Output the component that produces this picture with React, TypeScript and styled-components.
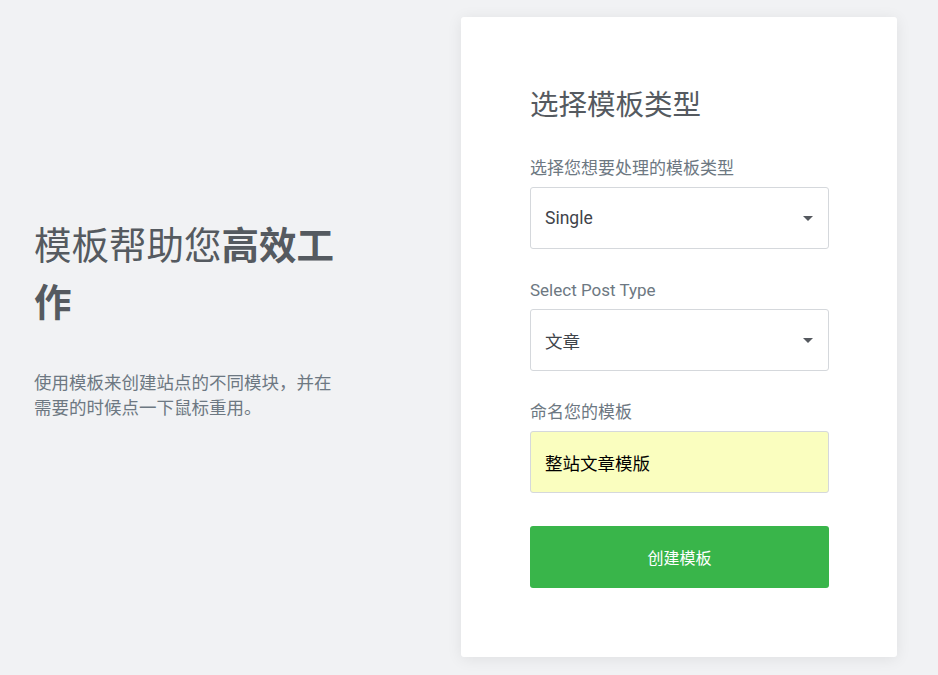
import React, { useState } from "react";
import styled, { createGlobalStyle } from "styled-components";

const GlobalStyle = createGlobalStyle`
  html, body {
    margin: 0;
    padding: 0;
    background: #f1f2f4;
    font-family: Roboto, "Noto Sans CJK SC", "Liberation Sans", sans-serif;
  }
`;

const Page = styled.div`
  display: flex;
  height: 675px;
  box-sizing: border-box;
  padding: 17px 41px 18px 34px;
`;

const Intro = styled.div`
  flex: 1;
  display: flex;
  flex-direction: column;
  justify-content: center;
  padding-bottom: 36px;
`;

const IntroTitle = styled.h1`
  margin: 0 0 39px;
  max-width: 310px;
  font-size: 37.5px;
  line-height: 57px;
  font-weight: 400;
  color: #555a60;
`;

const Strong = styled.span`
  font-weight: 700;
`;

const IntroText = styled.p`
  margin: 0;
  max-width: 310px;
  font-size: 17.5px;
  line-height: 25px;
  color: #6d7882;
`;

const Card = styled.form`
  width: 436px;
  box-sizing: border-box;
  align-self: flex-start;
  padding: 72px 68px 69px 69px;
  background: #fff;
  border-radius: 3px;
  box-shadow: 0 2px 15px rgba(0, 0, 0, 0.08);
`;

const CardTitle = styled.h2`
  margin: 0 0 33px;
  font-size: 28.5px;
  line-height: 34px;
  font-weight: 400;
  color: #555a60;
`;

const Field = styled.div`
  margin-bottom: 29px;
  &:last-of-type {
    margin-bottom: 33px;
  }
`;

const Label = styled.label`
  display: block;
  margin-bottom: 7px;
  font-size: 17px;
  line-height: 24px;
  color: #6d7882;
`;

const SelectBox = styled.div`
  height: 62px;
  box-sizing: border-box;
  display: flex;
  align-items: center;
  padding: 0 14px;
  border: 1px solid #d5d8dc;
  border-radius: 3px;
  background: #fff;
  font-size: 17.5px;
  color: #3f444a;
`;

const Caret = styled.span`
  margin-left: auto;
  margin-right: 1px;
  width: 0;
  height: 0;
  border-left: 5.5px solid transparent;
  border-right: 5.5px solid transparent;
  border-top: 5.5px solid #55595f;
`;

const TextInput = styled.input<{ $filled: boolean }>`
  display: block;
  width: 100%;
  height: 62px;
  box-sizing: border-box;
  padding: 0 14px;
  border: 1px solid #d5d8dc;
  border-radius: 3px;
  background: ${(p) => (p.$filled ? "#fafebf" : "#fff")};
  font-family: inherit;
  font-size: 17.5px;
  color: #000;
  outline: none;
`;

const Submit = styled.button`
  display: block;
  width: 100%;
  height: 62px;
  border: 0;
  border-radius: 3px;
  background: #39b54a;
  color: #fff;
  font-family: inherit;
  font-size: 16px;
  cursor: pointer;
`;

const Select = ({ value }: { value: string }) => (
  <SelectBox>
    {value}
    <Caret />
  </SelectBox>
);

const App = () => {
  const [name, setName] = useState("整站文章模版");

  return (
    <>
      <GlobalStyle />
      <Page>
        <Intro>
          <IntroTitle>
            模板帮助您<Strong>高效工作</Strong>
          </IntroTitle>
          <IntroText>
            使用模板来创建站点的不同模块，并在需要的时候点一下鼠标重用。
          </IntroText>
        </Intro>
        <Card onSubmit={(e) => e.preventDefault()}>
          <CardTitle>选择模板类型</CardTitle>
          <Field>
            <Label>选择您想要处理的模板类型</Label>
            <Select value="Single" />
          </Field>
          <Field>
            <Label>Select Post Type</Label>
            <Select value="文章" />
          </Field>
          <Field>
            <Label>命名您的模板</Label>
            <TextInput
              $filled={name.length > 0}
              value={name}
              onChange={(e) => setName(e.target.value)}
            />
          </Field>
          <Submit type="submit">创建模板</Submit>
        </Card>
      </Page>
    </>
  );
};

export default App;
